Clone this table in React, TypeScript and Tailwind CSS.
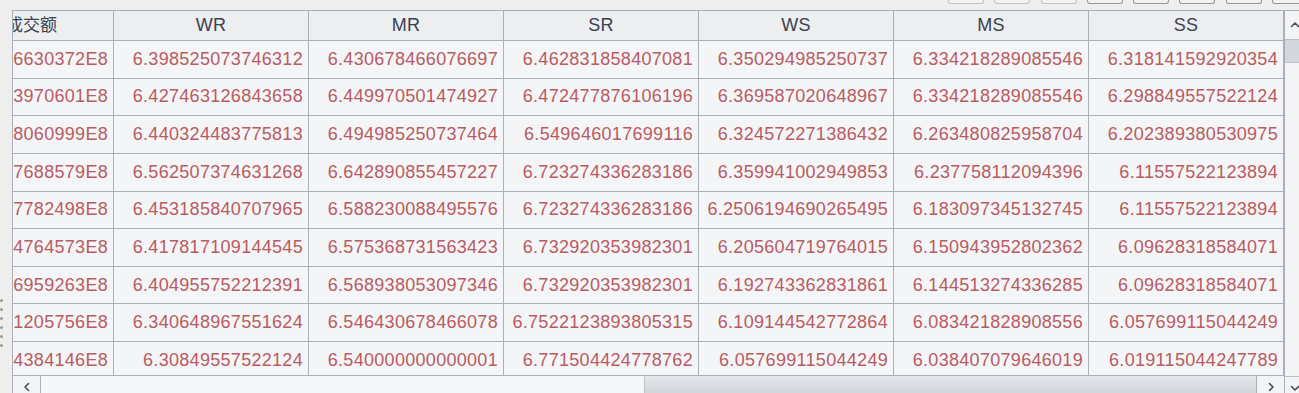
import React from "react";

const cols = ["WR", "MR", "SR", "WS", "MS", "SS"];
const first = ["2.6630372E8", "2.3970601E8", "2.8060999E8", "2.7688579E8", "2.7782498E8", "2.4764573E8", "2.6959263E8", "2.1205756E8", "2.4384146E8"];
const rows: string[][] = [
  ["6.398525073746312", "6.430678466076697", "6.462831858407081", "6.350294985250737", "6.334218289085546", "6.318141592920354"],
  ["6.427463126843658", "6.449970501474927", "6.472477876106196", "6.369587020648967", "6.334218289085546", "6.298849557522124"],
  ["6.440324483775813", "6.494985250737464", "6.549646017699116", "6.324572271386432", "6.263480825958704", "6.202389380530975"],
  ["6.562507374631268", "6.642890855457227", "6.723274336283186", "6.359941002949853", "6.237758112094396", "6.11557522123894"],
  ["6.453185840707965", "6.588230088495576", "6.723274336283186", "6.2506194690265495", "6.183097345132745", "6.11557522123894"],
  ["6.417817109144545", "6.575368731563423", "6.732920353982301", "6.205604719764015", "6.150943952802362", "6.09628318584071"],
  ["6.404955752212391", "6.568938053097346", "6.732920353982301", "6.192743362831861", "6.144513274336285", "6.09628318584071"],
  ["6.340648967551624", "6.546430678466078", "6.7522123893805315", "6.109144542772864", "6.083421828908556", "6.057699115044249"],
  ["6.30849557522124", "6.540000000000001", "6.771504424778762", "6.057699115044249", "6.038407079646019", "6.019115044247789"],
];

const Chev = ({ d }: { d: string }) => (
  <svg width="10" height="10" viewBox="0 0 10 10" fill="none" stroke="#4a4f57" strokeWidth="1.6" strokeLinecap="round" strokeLinejoin="round">
    <path d={d} />
  </svg>
);

export default function App() {
  return (
    <div
      className="w-[1299px] h-[393px] overflow-hidden bg-[#eeeeee] relative"
      style={{ fontFamily: '"Liberation Sans", "Noto Sans CJK SC", Arial, sans-serif' }}
    >
      {/* toolbar remnants */}
      <div className="h-[10px] flex items-start pl-[948px] gap-[10.3px]">
        {Array.from({ length: 8 }).map((_, i) => (
          <div
            key={i}
            className={`w-[36px] h-[4px] shrink-0 border border-t-0 rounded-b-[3px] ${i < 3 ? "border-[#bfc4c9]" : "border-[#8f969d]"} bg-[#f2f2f2]`}
          />
        ))}
      </div>
      <div className="flex h-[388px]">
        {/* splitter gutter */}
        <div className="w-[12px] shrink-0 flex flex-col gap-[6px] pt-[289px]">
          {Array.from({ length: 6 }).map((_, i) => (
            <div key={i} className="w-[3px] h-[3px] rounded-full bg-[#9a9a9a]" />
          ))}
        </div>
        {/* panel */}
        <div className="w-[1293px] shrink-0 flex border-l border-t border-[#a8b1ba]">
          <div className="w-[1271px] shrink-0 flex flex-col">
            <div className="h-[364px] overflow-hidden bg-[#f4f5f6]">
              <div className="ml-[-55px]">
                <div className="flex h-[30px] border-b border-[#a8b1ba] bg-[#eceef0] text-[18px] text-[#3b4150] tracking-[0.3px]">
                  <div className="w-[156px] shrink-0 border-r border-[#a8b1ba] flex items-center justify-center pr-[8px] text-[17px] tracking-normal">
                    成交额
                  </div>
                  {cols.map((c) => (
                    <div key={c} className="w-[195px] shrink-0 border-r border-[#a8b1ba] flex items-center justify-center">
                      {c}
                    </div>
                  ))}
                </div>
                {rows.map((r, ri) => (
                  <div key={ri} className="flex h-[37.625px] border-b border-[#a8b1ba] text-[18px] text-[#b95b63] tracking-[0.3px]">
                    <div className="w-[156px] shrink-0 border-r border-[#a8b1ba] flex items-center justify-end pr-[5px] whitespace-nowrap">
                      {first[ri]}
                    </div>
                    {r.map((v, ci) => (
                      <div key={ci} className="w-[195px] shrink-0 border-r border-[#a8b1ba] flex items-center justify-end pr-[5px] whitespace-nowrap">
                        {v}
                      </div>
                    ))}
                  </div>
                ))}
              </div>
            </div>
            {/* horizontal scrollbar */}
            <div className="h-[23px] flex border-t border-[#a8b1ba] bg-[#f6f7f8]">
              <div className="w-[28px] shrink-0 border-r border-[#a8b1ba] flex items-center justify-center bg-[#f3f4f5]">
                <Chev d="M6.5 1.5 L3 5 L6.5 8.5" />
              </div>
              <div className="flex-1 flex">
                <div className="flex-1" />
                <div className="w-[612px] shrink-0 bg-gradient-to-b from-[#e3e7eb] to-[#cdd2d8] border-l border-[#bcc3ca]" />
              </div>
              <div className="w-[28px] shrink-0 border-l border-[#a8b1ba] flex items-center justify-center bg-[#f3f4f5]">
                <Chev d="M3.5 1.5 L7 5 L3.5 8.5" />
              </div>
            </div>
          </div>
          {/* vertical scrollbar */}
          <div className="w-[20px] shrink-0 flex flex-col border-l border-[#a8b1ba] bg-[#f4f4f5]">
            <div className="h-[29px] shrink-0 flex items-center justify-center border-b border-[#b8bfc6]">
              <Chev d="M1.5 6.5 L5 3 L8.5 6.5" />
            </div>
            <div className="h-[23px] shrink-0 bg-[#d3d8de] border-b border-[#bcc3ca]" />
            <div className="flex-1" />
            <div className="h-[22px] shrink-0 flex items-center justify-center border-t border-[#b8bfc6]">
              <Chev d="M1.5 3.5 L5 7 L8.5 3.5" />
            </div>
          </div>
        </div>
      </div>
    </div>
  );
}
